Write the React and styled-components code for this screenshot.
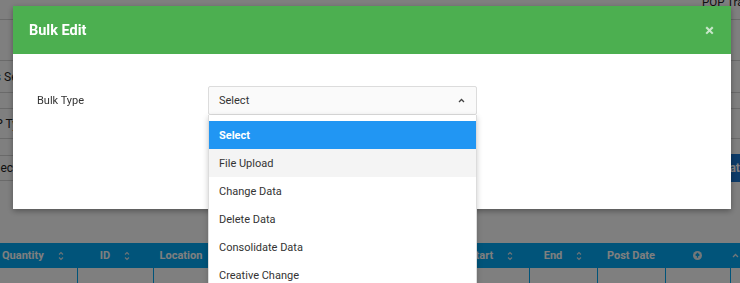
import React from "react";
import styled, { createGlobalStyle } from "styled-components";

const GlobalStyle = createGlobalStyle`
  html, body {
    margin: 0;
    padding: 0;
    background: #fff;
    overflow: hidden;
  }
  body {
    font-family: Roboto, "Liberation Sans", Arial, sans-serif;
  }
  * {
    box-sizing: border-box;
  }
`;

const bulkTypes = [
  "Select",
  "File Upload",
  "Change Data",
  "Delete Data",
  "Consolidate Data",
  "Creative Change",
  "Rate Change",
];

const columns = [
  { label: "Quantity", sort: true, start: true },
  { label: "ID", sort: true },
  { label: "Location", sort: true },
  { label: "Brand", sort: true },
  { label: "Status", sort: true },
  { label: "Version", sort: true },
  { label: "Start", sort: true },
  { label: "End", sort: true },
  { label: "Post Date" },
  { label: "", circle: true },
  { label: "", caret: true },
];

const SortIcon = () => (
  <svg width="6" height="10" viewBox="0 0 6 10" fill="none">
    <path d="M1 3.5L3 1.5L5 3.5M1 6.5L3 8.5L5 6.5" stroke="#d8e6ee" strokeWidth="1.1" />
  </svg>
);

const CircleUp = () => (
  <svg width="9" height="9" viewBox="0 0 10 10">
    <circle cx="5" cy="5" r="5" fill="#e6eef2" />
    <path d="M5 7.6V3M2.9 5L5 2.8L7.1 5" stroke="#03a9f4" strokeWidth="1.4" fill="none" />
  </svg>
);

const Caret = ({ color = "#e6eef2" }) => (
  <svg width="7" height="5" viewBox="0 0 7 5" fill="none">
    <path d="M1 4L3.5 1.5L6 4" stroke={color} strokeWidth="1.3" />
  </svg>
);

const App = () => (
  <>
    <GlobalStyle />
    <Page>
      <TopBar>
        <PageTitle>POP Tracker</PageTitle>
      </TopBar>
      <FilterRow $h={40} />
      <FilterRow $h={31}>
        <FilterLabel $w={37}>Status Select</FilterLabel>
      </FilterRow>
      <FilterRow $h={29} $gap={15} $top>
        <FilterLabel $w={31}>POP Type</FilterLabel>
      </FilterRow>
      <FilterRow $h={24} $gap={16} $top>
        <FilterLabel $w={17}>Select</FilterLabel>
        <ActionButton>Update</ActionButton>
      </FilterRow>

      <Table>
        <TableHead>
          {columns.map((c, i) => (
            <HeadCell key={i} $start={c.start}>
              {c.label && <span>{c.label}</span>}
              {c.sort && <SortIcon />}
              {c.circle && <CircleUp />}
              {c.caret && <Caret />}
            </HeadCell>
          ))}
        </TableHead>
        <TableRow>
          {columns.map((c, i) => (
            <BodyCell key={i} />
          ))}
        </TableRow>
      </Table>

      <Overlay>
        <Modal>
          <ModalHeader>
            <ModalTitle>Bulk Edit</ModalTitle>
            <CloseButton>×</CloseButton>
          </ModalHeader>
          <ModalBody>
            <FieldRow>
              <FieldLabel>Bulk Type</FieldLabel>
              <SelectWrap>
                <SelectTrigger>
                  <span>Select</span>
                  <Caret color="#444" />
                </SelectTrigger>
                <Menu>
                  {bulkTypes.map((t, i) => (
                    <MenuItem key={t} $selected={i === 0} $hover={i === 1}>
                      {t}
                    </MenuItem>
                  ))}
                </Menu>
              </SelectWrap>
            </FieldRow>
          </ModalBody>
        </Modal>
      </Overlay>
    </Page>
  </>
);

export default App;

const Page = styled.div`
  position: relative;
  width: 740px;
  height: 283px;
  overflow: hidden;
  background: #fff;
  color: #333;
`;

const TopBar = styled.div`
  height: 20px;
  display: flex;
  justify-content: flex-end;
  align-items: flex-start;
  border-bottom: 1px solid #d4d4d4;
`;

const PageTitle = styled.div`
  width: 38px;
  margin-top: -5px;
  overflow: hidden;
  white-space: nowrap;
  font-size: 11.5px;
  color: #222;
`;

const FilterRow = styled.div`
  height: ${(p) => p.$h + (p.$top ? 2 : 1)}px;
  margin-top: ${(p) => p.$gap || 0}px;
  display: flex;
  align-items: center;
  justify-content: space-between;
  border-top: ${(p) => (p.$top ? "1px solid #d4d4d4" : "none")};
  border-bottom: 1px solid #d4d4d4;
`;

const FilterLabel = styled.div`
  width: ${(p) => p.$w}px;
  display: flex;
  justify-content: flex-end;
  overflow: hidden;
  white-space: nowrap;
  font-size: 12px;
  color: #222;
`;

const ActionButton = styled.div`
  width: 40px;
  height: 28px;
  display: flex;
  align-items: center;
  padding-left: 8px;
  overflow: hidden;
  white-space: nowrap;
  background: #1976d2;
  color: #fff;
  font-size: 12px;
  font-weight: 700;
`;

const gridCols = "77px 76px 76px 76px 76px 72px 76px 68px 68px 65px 1fr";

const Table = styled.div`
  margin-top: 62px;
`;

const TableHead = styled.div`
  display: grid;
  grid-template-columns: ${gridCols};
  height: 25px;
  background: #03a9f4;
`;

const HeadCell = styled.div`
  display: flex;
  align-items: center;
  justify-content: ${(p) => (p.$start ? "flex-start" : "center")};
  gap: 14px;
  padding-left: ${(p) => (p.$start ? "2px" : "0")};
  color: #fff;
  font-size: 11px;
  font-weight: 700;
  white-space: nowrap;
`;

const TableRow = styled.div`
  display: grid;
  grid-template-columns: ${gridCols};
  height: 20px;
`;

const BodyCell = styled.div`
  & + & {
    border-left: 1px solid #03a9f4;
  }
`;

const Overlay = styled.div`
  position: fixed;
  inset: 0;
  background: rgba(0, 0, 0, 0.5);
  z-index: 10;
`;

const Modal = styled.div`
  position: absolute;
  top: 6px;
  left: 13px;
  width: 718px;
  background: #fff;
  box-shadow: 0 2px 6px rgba(0, 0, 0, 0.35);
`;

const ModalHeader = styled.div`
  height: 48px;
  display: flex;
  align-items: center;
  justify-content: space-between;
  padding: 0 17px 0 16px;
  background: #4caf50;
`;

const ModalTitle = styled.h2`
  margin: 0;
  font-size: 14.5px;
  font-weight: 700;
  color: #fff;
`;

const CloseButton = styled.button`
  border: none;
  background: transparent;
  padding: 0;
  line-height: 1;
  font-family: inherit;
  font-size: 17px;
  font-weight: 700;
  color: rgba(255, 255, 255, 0.7);
`;

const ModalBody = styled.div`
  height: 155px;
  padding: 32px 24px 0;
`;

const FieldRow = styled.div`
  display: grid;
  grid-template-columns: 171px 269px;
  align-items: center;
`;

const FieldLabel = styled.div`
  font-size: 11px;
  color: #333;
`;

const SelectWrap = styled.div`
  position: relative;
`;

const SelectTrigger = styled.div`
  height: 29px;
  display: flex;
  align-items: center;
  justify-content: space-between;
  padding: 0 11px 0 10px;
  border: 1px solid #dcdcdc;
  border-radius: 2px;
  background: #fafafa;
  font-size: 11px;
  color: #333;
`;

const Menu = styled.div`
  position: absolute;
  top: 100%;
  left: 0;
  right: 0;
  padding-top: 6px;
  background: #fff;
  border: 1px solid #dcdcdc;
  border-top: none;
  box-shadow: 0 2px 6px rgba(0, 0, 0, 0.2);
  z-index: 2;
`;

const MenuItem = styled.div`
  height: 28px;
  display: flex;
  align-items: center;
  padding: 0 10px;
  font-size: 11px;
  font-weight: ${(p) => (p.$selected ? 700 : 400)};
  color: ${(p) => (p.$selected ? "#fff" : "#333")};
  background: ${(p) => (p.$selected ? "#2196f3" : p.$hover ? "#f4f4f4" : "#fff")};
`;
